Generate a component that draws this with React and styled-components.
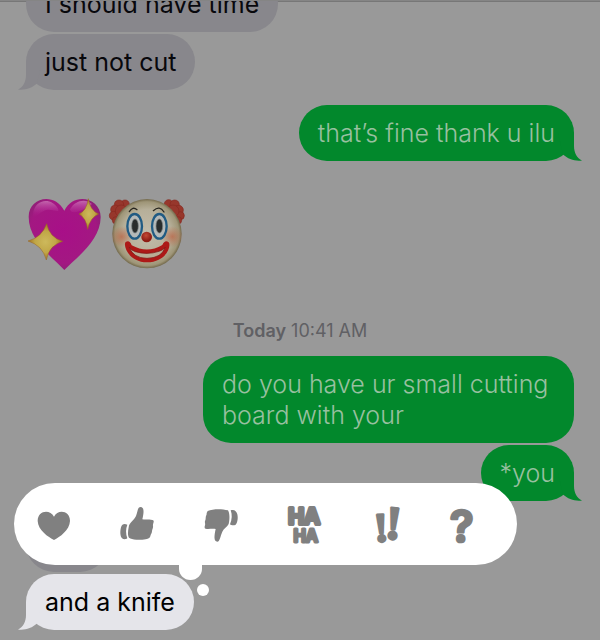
import React from "react";
import styled, { createGlobalStyle, css } from "styled-components";

const colors = {
  backdrop: "#999999",
  received: "#88878c",
  active: "#e5e5ea",
  sent: "#02882c",
  sentText: "#98c0a0",
  icon: "#808080",
};

const GlobalStyle = createGlobalStyle`
  *, *::before, *::after { box-sizing: border-box; }
  body {
    margin: 0;
    background: ${colors.backdrop};
    font-family: Inter, "Liberation Sans", sans-serif;
  }
`;

const Screen = styled.main`
  display: flex;
  flex-direction: column;
  justify-content: flex-end;
  height: 100vh;
  overflow: hidden;
  padding: 0 26px 10px;
  border-top: 1px solid #858585;
  box-shadow: inset 0 1px 0 #777777;
`;

const Group = styled.section`
  display: flex;
  flex-direction: column;
  flex-shrink: 0;
  gap: 2px;
  align-items: ${(p) => (p.$sent ? "flex-end" : "flex-start")};
  margin-top: ${(p) => p.$space || 0}px;
`;

const Bubble = styled.div`
  position: relative;
  max-width: 371px;
  min-width: 82px;
  min-height: 56px;
  padding: 13px 19px 12px;
  border-radius: 28px;
  font-size: 25px;
  line-height: 31px;
  background: ${colors.received};
  color: #08080c;
  ${(p) =>
    p.$sent &&
    css`
      background: ${colors.sent};
      color: ${colors.sentText};
      font-weight: 300;
    `}
  ${(p) =>
    p.$active &&
    css`
      background: ${colors.active};
      color: #000;
    `}
`;

const TailSvg = styled.svg`
  position: absolute;
  bottom: 0;
  width: 28px;
  height: 28px;
  ${(p) => (p.$sent ? "right: -8px; transform: scaleX(-1);" : "left: -8px;")}
  fill: ${(p) => (p.$active ? colors.active : p.$sent ? colors.sent : colors.received)};
`;

const EmojiRow = styled.div`
  display: flex;
  flex-shrink: 0;
  gap: 10px;
  margin-top: 35px;

  svg {
    width: 74px;
    height: 74px;
    overflow: visible;
  }
`;

const Timestamp = styled.time`
  flex-shrink: 0;
  align-self: center;
  margin-top: 50px;
  font-size: 18px;
  line-height: 22px;
  color: #606064;

  strong {
    font-weight: 600;
  }
`;

const ActiveMessage = styled.div`
  position: relative;
`;

const Picker = styled.div`
  position: absolute;
  z-index: 2;
  left: -12px;
  bottom: calc(100% + 9px);
  display: flex;
  align-items: center;
  gap: 50px;
  height: 82px;
  padding: 0 46px 0 23px;
  border-radius: 41px;
  background: #fff;
`;

const Reaction = styled.button`
  display: flex;
  padding: 0;
  border: 0;
  background: none;
  cursor: pointer;
`;

const ReactionSvg = styled.svg`
  display: block;
  height: 40px;
  overflow: visible;
  fill: ${colors.icon};
  stroke: ${colors.icon};
  stroke-width: 0;
  stroke-linejoin: round;
  font-family: Inter, sans-serif;
  font-weight: 600;
`;

const MarkText = styled.text`
  font-family: "Liberation Serif", serif;
  font-weight: 700;
`;

const PickerTail = styled.svg`
  position: absolute;
  left: 164px;
  top: 100%;
  width: 34px;
  height: 32px;
  margin-top: -1px;
  fill: #fff;
`;

function Tail(props) {
  return (
    <TailSvg viewBox="0 0 28 28" aria-hidden="true" {...props}>
      <path d="M8 0V13C8 20 5 25 0 27.5C7 28.5 14 26 19 21.5L24 0Z" />
    </TailSvg>
  );
}

function Message({ children, tail, sent, active }) {
  return (
    <Bubble $sent={sent} $active={active}>
      {tail && <Tail $sent={sent} $active={active} />}
      {children}
    </Bubble>
  );
}

function SparklingHeart() {
  return (
    <svg viewBox="34 33 222 222" role="img" aria-label="sparkling heart">
      <defs>
        <radialGradient id="heartFill" cx=".48" cy=".45" r=".65">
          <stop offset="0" stopColor="#a80f88" />
          <stop offset=".7" stopColor="#a31882" />
          <stop offset="1" stopColor="#80256d" />
        </radialGradient>
        <linearGradient id="shine" x2="0" y2="1">
          <stop offset="0" stopColor="#d082bd" stopOpacity=".75" />
          <stop offset="1" stopColor="#b01c92" stopOpacity="0" />
        </linearGradient>
        <radialGradient id="gold">
          <stop offset="0" stopColor="#cdb95c" />
          <stop offset=".6" stopColor="#c0a646" />
          <stop offset="1" stopColor="#a07020" />
        </radialGradient>
      </defs>
      <path fill="url(#heartFill)" d="M149 255C116 219 42 168 42 95C42 37 119 20 149 77C177 19 258 38 258 96C258 166 184 219 149 255Z" />
      <path fill="url(#shine)" d="M55 90C57 43 109 34 130 71C137 87 115 70 94 75C74 80 57 108 55 90ZM166 73C181 44 215 40 232 57C214 72 169 94 166 73Z" />
      <path fill="url(#gold)" stroke="#9a671e" strokeWidth="1.5" d="M96 116Q104 157 144 169Q103 181 95 225Q84 181 40 168Q82 157 96 116Z" />
      <path fill="url(#gold)" stroke="#9a671e" strokeWidth="1.5" d="M221 41Q226 76 252 87Q226 97 219 133Q214 98 193 87Q216 77 221 41Z" />
    </svg>
  );
}

function ClownFace() {
  return (
    <svg viewBox="288 33 222 222" role="img" aria-label="clown face">
      <defs>
        <radialGradient id="face">
          <stop offset="0" stopColor="#c2bcab" />
          <stop offset=".7" stopColor="#b6af99" />
          <stop offset=".92" stopColor="#9e9577" />
          <stop offset="1" stopColor="#73694b" />
        </radialGradient>
        <radialGradient id="cheek">
          <stop offset="0" stopColor="#bb6546" stopOpacity=".75" />
          <stop offset="1" stopColor="#bb6546" stopOpacity="0" />
        </radialGradient>
        <radialGradient id="nose" cx=".45" cy=".35">
          <stop offset="0" stopColor="#c34a35" />
          <stop offset="1" stopColor="#8f1c14" />
        </radialGradient>
      </defs>
      <g fill="#97372c" stroke="#87291f" strokeWidth="2">
        {[[333, 58, 13], [315, 59, 14], [304, 74, 14], [299, 92, 13], [306, 106, 11], [322, 78, 18], [464, 57, 13], [482, 59, 14], [494, 75, 14], [499, 92, 12], [492, 106, 11], [477, 78, 18]].map(([x, y, r]) => (
          <circle key={`${x}-${y}`} cx={x} cy={y} r={r} />
        ))}
      </g>
      <circle cx="399" cy="146" r="104" fill="url(#face)" />
      <circle cx="323" cy="155" r="32" fill="url(#cheek)" />
      <circle cx="475" cy="155" r="32" fill="url(#cheek)" />
      <g fill="#b5b9b8" stroke="#215b83" strokeWidth="7">
        <ellipse cx="362" cy="124" rx="22" ry="37" />
        <ellipse cx="436" cy="124" rx="22" ry="37" />
      </g>
      <g fill="#292c2c" stroke="#777f80" strokeWidth="2">
        <ellipse cx="363" cy="123" rx="10" ry="21" />
        <ellipse cx="436" cy="123" rx="10" ry="21" />
      </g>
      <path d="M346 80Q356 63 369 74M418 77Q437 60 450 81" fill="none" stroke="#292720" strokeWidth="4" strokeLinecap="round" />
      <path d="M335 171Q347 164 353 181Q400 207 445 180Q453 163 464 172C473 182 457 232 399 232C344 232 326 181 335 171Z" fill="#ad1917" />
      <path d="M346 187Q351 196 364 200Q399 211 435 199Q449 195 453 187Q445 218 399 220Q357 219 346 187Z" fill="#b8ac94" stroke="#77110f" strokeWidth="2" />
      <circle cx="398" cy="156" r="16" fill="url(#nose)" />
    </svg>
  );
}

const reactions = [
  {
    label: "Love",
    width: 34,
    box: "111 102 102 120",
    art: <path d="M162 210C145 201 114 181 113 153C113 121 150 117 162 140C173 117 210 121 210 153C209 181 179 201 162 210Z" />,
  },
  {
    label: "Like",
    width: 34,
    box: "63 27 102 120",
    art: (
      <>
        <path d="M86 97C88 82 102 77 108 63C113 52 112 36 122 36C133 37 132 51 127 73C139 75 160 72 161 78C162 82 158 87 159 93C160 99 156 103 156 109C156 115 152 117 151 124C148 135 128 135 109 134C99 133 92 131 87 128C82 120 84 108 86 97Z" />
        <path d="M82 89C72 85 66 88 63 97C60 108 60 124 66 130C71 134 79 133 82 130C77 116 77 101 82 89Z" />
      </>
    ),
  },
  {
    label: "Dislike",
    width: 34,
    box: "315 27 102 120",
    art: (
      <>
        <path d="M323 48C339 41 365 41 384 46C389 54 390 72 386 87C382 96 371 101 367 110C361 123 360 139 352 140C340 140 343 120 347 102C334 100 315 105 314 98C313 93 317 90 315 84C313 78 318 75 317 69C317 62 321 59 320 54Z" />
        <path d="M392 46C402 42 409 47 412 58C415 71 412 85 406 90C400 92 393 91 390 88C396 74 397 59 392 46Z" />
      </>
    ),
  },
  {
    label: "Laugh",
    width: 36,
    box: "57 27 108 120",
    art: (
      <text textAnchor="middle">
        <tspan x="102" y="88" fontSize="64" strokeWidth="12">HA</tspan>
        <tspan x="107" y="141" fontSize="50" strokeWidth="9">HA</tspan>
      </text>
    ),
  },
  {
    label: "Emphasize",
    width: 24,
    box: "315 27 72 120",
    art: (
      <g textAnchor="middle" strokeWidth="8">
        <MarkText fontSize="122" transform="translate(336 139) rotate(-4)">!</MarkText>
        <MarkText fontSize="140" transform="translate(367 131) rotate(5)">!</MarkText>
      </g>
    ),
  },
  {
    label: "Question",
    width: 22,
    box: "537 27 66 120",
    art: <text x="575" y="141" fontSize="132" textAnchor="middle" strokeWidth="8">?</text>,
  },
];

function ReactionPicker() {
  return (
    <Picker role="toolbar" aria-label="Reactions">
      {reactions.map((r) => (
        <Reaction key={r.label} type="button" aria-label={r.label}>
          <ReactionSvg viewBox={r.box} width={r.width}>
            {r.art}
          </ReactionSvg>
        </Reaction>
      ))}
      <PickerTail viewBox="0 0 34 32" aria-hidden="true">
        <path d="M1 0H24V5C24 11 19 16 12.5 16S1 11 1 5Z" />
        <circle cx="25" cy="26" r="6" />
      </PickerTail>
    </Picker>
  );
}

export default function App() {
  return (
    <>
      <GlobalStyle />
      <Screen>
        <Group>
          <Message>I should have time</Message>
          <Message tail>just not cut</Message>
        </Group>
        <Group $sent $space={15}>
          <Message sent tail>that’s fine thank u ilu</Message>
        </Group>
        <EmojiRow>
          <SparklingHeart />
          <ClownFace />
        </EmojiRow>
        <Timestamp>
          <strong>Today</strong> 10:41 AM
        </Timestamp>
        <Group $sent $space={14}>
          <Message sent>do you have ur small cutting board with your</Message>
          <Message sent tail>*you</Message>
        </Group>
        <Group $space={15}>
          <Message />
          <ActiveMessage>
            <ReactionPicker />
            <Message active tail>and a knife</Message>
          </ActiveMessage>
        </Group>
      </Screen>
    </>
  );
}
